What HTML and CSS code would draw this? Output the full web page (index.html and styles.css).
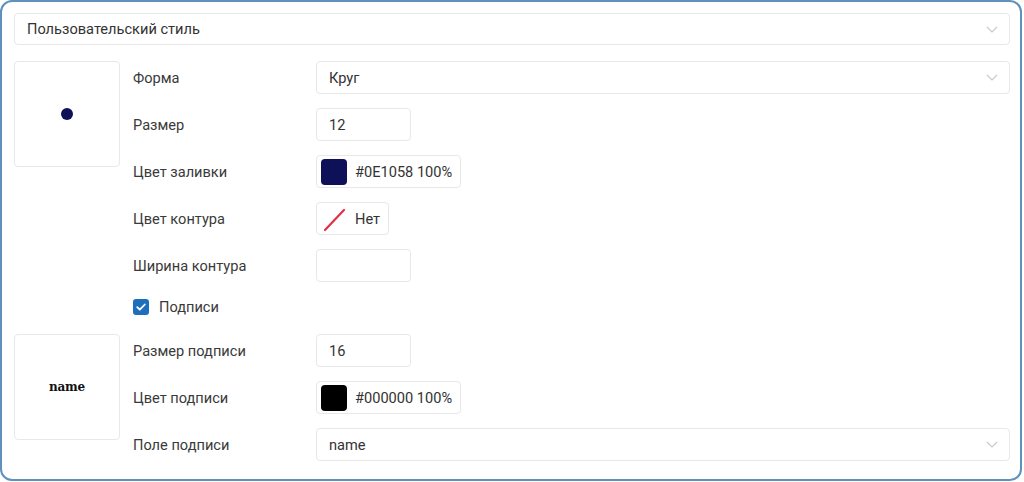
FILE: index.html
```html
<!DOCTYPE html>
<html lang="ru">
<head>
<meta charset="utf-8">
<title>Стиль слоя</title>
<link rel="stylesheet" href="styles.css">
</head>
<body>
<div class="panel">
  <div class="select top-select">
    <span>Пользовательский стиль</span>
    <svg class="chev" width="12" height="7" viewBox="0 0 12 7"><path d="M1 1l5 5 5-5" fill="none" stroke="#c8c8c8" stroke-width="1.1"/></svg>
  </div>

  <div class="section">
    <div class="preview">
      <span class="dot"></span>
    </div>
    <div class="rows">
      <div class="row">
        <span class="label">Форма</span>
        <div class="select grow">
          <span>Круг</span>
          <svg class="chev" width="12" height="7" viewBox="0 0 12 7"><path d="M1 1l5 5 5-5" fill="none" stroke="#c8c8c8" stroke-width="1.1"/></svg>
        </div>
      </div>
      <div class="row">
        <span class="label">Размер</span>
        <div class="input">12</div>
      </div>
      <div class="row">
        <span class="label">Цвет заливки</span>
        <div class="color">
          <span class="swatch fill-navy"></span>
          <span>#0E1058 100%</span>
        </div>
      </div>
      <div class="row">
        <span class="label">Цвет контура</span>
        <div class="color">
          <svg class="swatch-none" width="26" height="26" viewBox="0 0 26 26"><path d="M4 24L23 4" stroke="#e03248" stroke-width="2.2" stroke-linecap="round"/></svg>
          <span>Нет</span>
        </div>
      </div>
      <div class="row">
        <span class="label">Ширина контура</span>
        <div class="input"></div>
      </div>
    </div>
  </div>

  <label class="check-row">
    <span class="checkbox">
      <svg width="16" height="16" viewBox="0 0 16 16"><path d="M4.2 8.2l2.6 2.5 5-5.2" fill="none" stroke="#fff" stroke-width="1.8" stroke-linecap="round" stroke-linejoin="round"/></svg>
    </span>
    <span class="check-text">Подписи</span>
  </label>

  <div class="section">
    <div class="preview">
      <span class="label-sample">name</span>
    </div>
    <div class="rows">
      <div class="row">
        <span class="label">Размер подписи</span>
        <div class="input">16</div>
      </div>
      <div class="row">
        <span class="label">Цвет подписи</span>
        <div class="color">
          <span class="swatch fill-black"></span>
          <span>#000000 100%</span>
        </div>
      </div>
      <div class="row">
        <span class="label">Поле подписи</span>
        <div class="select grow">
          <span>name</span>
          <svg class="chev" width="12" height="7" viewBox="0 0 12 7"><path d="M1 1l5 5 5-5" fill="none" stroke="#c8c8c8" stroke-width="1.1"/></svg>
        </div>
      </div>
    </div>
  </div>
</div>
</body>
</html>
```

FILE: styles.css
```css
* { box-sizing: border-box; }

html, body {
  margin: 0;
  background: #fff;
}

body {
  font-family: Roboto, "Liberation Sans", sans-serif;
  font-size: 14.6px;
  color: #333;
}

.panel {
  width: 1022px;
  height: 481px;
  border: 2px solid #5f91bc;
  border-radius: 12px;
  padding: 11px 10px 0 12px;
  display: flex;
  flex-direction: column;
}

.select,
.input,
.color {
  border: 1px solid #e8e8e8;
  border-radius: 4px;
  background: #fff;
  display: flex;
  align-items: center;
  height: 33px;
}

.select {
  padding: 0 12px;
  justify-content: space-between;
}

.top-select {
  height: 32px;
  margin-bottom: 16px;
}

.chev { margin-right: -1px; }

.section {
  display: flex;
  gap: 13px;
}

.preview {
  width: 106px;
  height: 106px;
  flex: none;
  border: 1px solid #e8e8e8;
  border-radius: 4px;
  display: flex;
  align-items: center;
  justify-content: center;
}

.dot {
  width: 12px;
  height: 12px;
  border-radius: 50%;
  background: #0e1058;
}

.label-sample {
  font-family: "DejaVu Serif", "Liberation Serif", serif;
  font-weight: bold;
  font-size: 12px;
  color: #111;
  letter-spacing: -0.2px;
  text-shadow: 0 0 1px #fff, 0 0 2px #fff;
}

.rows {
  flex: 1;
  display: flex;
  flex-direction: column;
  gap: 14px;
}

.row {
  display: flex;
  align-items: center;
}

.label {
  width: 183px;
  flex: none;
  color: #3a3a3a;
}

.grow { flex: 1; }

.input {
  width: 95px;
  padding: 0 12px;
}

.color {
  padding: 0 8px 0 4px;
  gap: 8px;
}

.swatch {
  width: 26px;
  height: 26px;
  border-radius: 4px;
}

.fill-navy { background: #0e1058; }
.fill-black { background: #000; }

.swatch-none {
  display: block;
}

.check-row {
  display: flex;
  align-items: center;
  height: 22px;
  margin: 14px 0 16px 119px;
  gap: 10px;
}

.checkbox {
  width: 16px;
  height: 16px;
  border-radius: 3px;
  background: #1d6fbb;
  display: flex;
}

.check-text { color: #3a3a3a; }
```
